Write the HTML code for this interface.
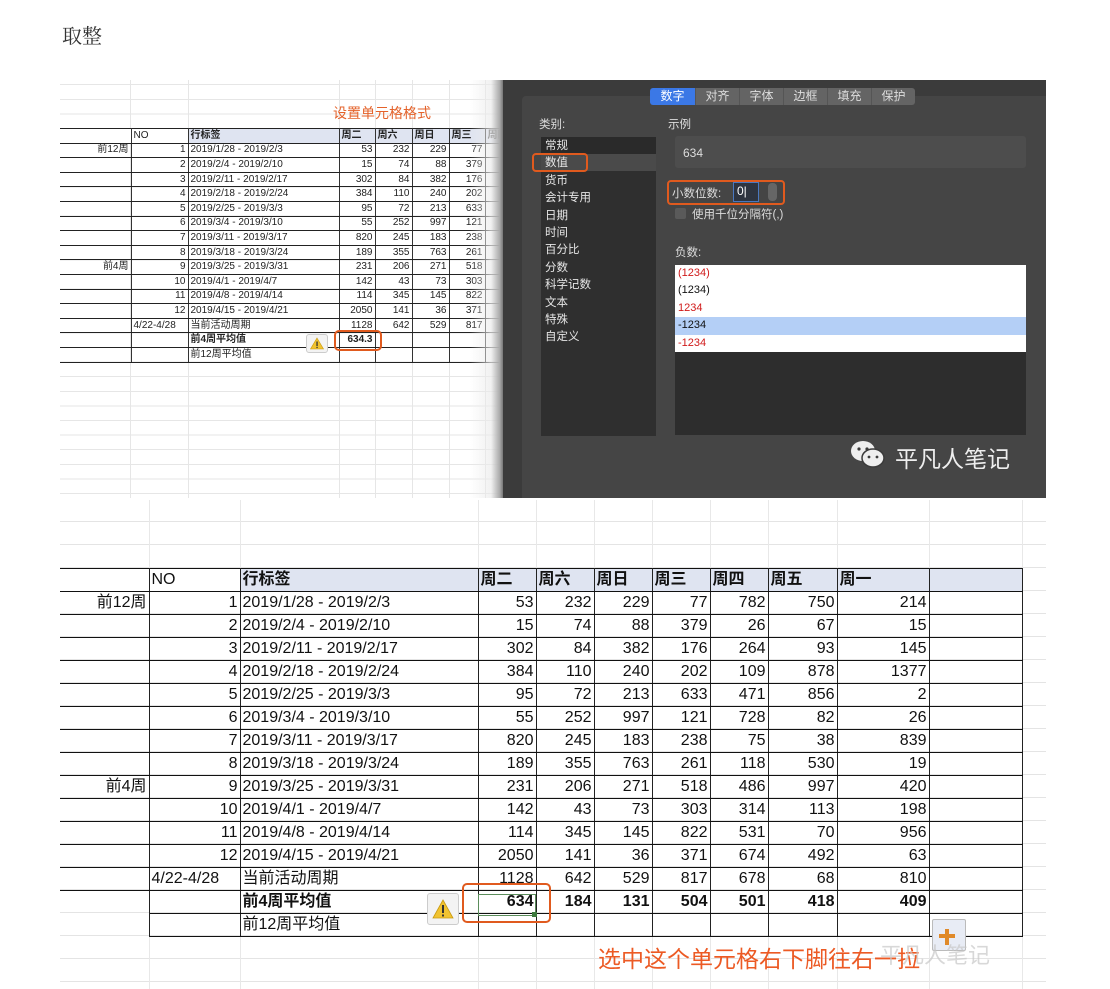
<!DOCTYPE html>
<html><head><meta charset="utf-8"><style>
body{margin:0;width:1110px;height:989px;background:#fff;position:relative;overflow:hidden;font-family:"Liberation Sans","Noto Sans CJK SC",sans-serif}
.abs{position:absolute}
table{border-collapse:collapse;table-layout:fixed;position:absolute}
td{padding:0 2px;white-space:nowrap;overflow:hidden;box-sizing:border-box}
.t td{height:14.6px;font-size:10px;line-height:12px;border-top:1.3px solid #222;border-bottom:1.3px solid #222;border-left:1px solid #333;border-right:1px solid #333;color:#222}
.b td{height:23px;font-size:16px;line-height:20px;border-top:1.6px solid #111;border-bottom:1.6px solid #111;border-left:1px solid #222;border-right:1px solid #222;color:#111}
td.f{border-left:none}
.r{text-align:right}
.h td{background:#dfe4f1}
.h td.f,.h td.n{background:#fff}
.bo td{font-weight:bold}
.nb{border-top:none!important;border-bottom:none!important}
.dlg{font-family:"Liberation Sans","Noto Sans CJK SC",sans-serif;color:#ddd;font-size:11.5px}
.warn{background:#f3f3f3;border:1px solid #ccc;border-radius:3px}
</style></head><body>
<div class="abs" style="left:62px;top:20px;font-size:20px;color:#333;font-family:'Liberation Serif','Noto Serif CJK SC',serif">取整</div>

<!-- top sheet -->
<div class="abs" style="left:60px;top:80px;width:445px;height:418px;background-color:#fff;
background-image:linear-gradient(90deg,transparent 70px,#e6e6e6 70px,#e6e6e6 71px,transparent 71px,transparent 128px,#e6e6e6 128px,#e6e6e6 129px,transparent 129px,transparent 279px,#e6e6e6 279px,#e6e6e6 280px,transparent 280px,transparent 315px,#e6e6e6 315px,#e6e6e6 316px,transparent 316px,transparent 352px,#e6e6e6 352px,#e6e6e6 353px,transparent 353px,transparent 389px,#e6e6e6 389px,#e6e6e6 390px,transparent 390px,transparent 425px,#e6e6e6 425px,#e6e6e6 426px,transparent 426px),repeating-linear-gradient(180deg,transparent 0,transparent 4.2px,#e6e6e6 4.2px,#e6e6e6 5.2px,transparent 5.2px,transparent 14.6px)"></div>
<div class="abs" style="left:333px;top:103px;font-size:14px;color:#e4622a">设置单元格格式</div>
<table class="t" style="left:60px;top:128px;width:445px">
<colgroup><col style="width:71px"><col style="width:57px"><col style="width:151px"><col style="width:36px"><col style="width:37px"><col style="width:37px"><col style="width:36px"><col style="width:20px"></colgroup>
<tr class="h"><td class="f"></td><td class="n">NO</td><td><b>行标签</b></td><td><b>周二</b></td><td><b>周六</b></td><td><b>周日</b></td><td><b>周三</b></td><td><b>周四</b></td></tr>
<tr><td class="f r">前12周</td><td class="r">1</td><td>2019/1/28 - 2019/2/3</td><td class="r">53</td><td class="r">232</td><td class="r">229</td><td class="r">77</td><td></td></tr>
<tr><td class="f"></td><td class="r">2</td><td>2019/2/4 - 2019/2/10</td><td class="r">15</td><td class="r">74</td><td class="r">88</td><td class="r">379</td><td></td></tr>
<tr><td class="f"></td><td class="r">3</td><td>2019/2/11 - 2019/2/17</td><td class="r">302</td><td class="r">84</td><td class="r">382</td><td class="r">176</td><td></td></tr>
<tr><td class="f"></td><td class="r">4</td><td>2019/2/18 - 2019/2/24</td><td class="r">384</td><td class="r">110</td><td class="r">240</td><td class="r">202</td><td></td></tr>
<tr><td class="f"></td><td class="r">5</td><td>2019/2/25 - 2019/3/3</td><td class="r">95</td><td class="r">72</td><td class="r">213</td><td class="r">633</td><td></td></tr>
<tr><td class="f"></td><td class="r">6</td><td>2019/3/4 - 2019/3/10</td><td class="r">55</td><td class="r">252</td><td class="r">997</td><td class="r">121</td><td></td></tr>
<tr><td class="f"></td><td class="r">7</td><td>2019/3/11 - 2019/3/17</td><td class="r">820</td><td class="r">245</td><td class="r">183</td><td class="r">238</td><td></td></tr>
<tr><td class="f"></td><td class="r">8</td><td>2019/3/18 - 2019/3/24</td><td class="r">189</td><td class="r">355</td><td class="r">763</td><td class="r">261</td><td></td></tr>
<tr><td class="f r">前4周</td><td class="r">9</td><td>2019/3/25 - 2019/3/31</td><td class="r">231</td><td class="r">206</td><td class="r">271</td><td class="r">518</td><td></td></tr>
<tr><td class="f"></td><td class="r">10</td><td>2019/4/1 - 2019/4/7</td><td class="r">142</td><td class="r">43</td><td class="r">73</td><td class="r">303</td><td></td></tr>
<tr><td class="f"></td><td class="r">11</td><td>2019/4/8 - 2019/4/14</td><td class="r">114</td><td class="r">345</td><td class="r">145</td><td class="r">822</td><td></td></tr>
<tr><td class="f"></td><td class="r">12</td><td>2019/4/15 - 2019/4/21</td><td class="r">2050</td><td class="r">141</td><td class="r">36</td><td class="r">371</td><td></td></tr>
<tr><td class="f"></td><td>4/22-4/28</td><td>当前活动周期</td><td class="r">1128</td><td class="r">642</td><td class="r">529</td><td class="r">817</td><td></td></tr>
<tr><td class="f"></td><td></td><td><b>前4周平均值</b></td><td class="r"><b>634.3</b></td><td></td><td></td><td></td><td></td></tr>
<tr><td class="f"></td><td></td><td>前12周平均值</td><td></td><td></td><td></td><td></td><td></td></tr>
</table>
<div class="abs" style="left:470px;top:80px;width:35px;height:418px;background:linear-gradient(90deg,rgba(255,255,255,0),rgba(235,235,235,.7) 60%,#aaa 85%,#555)"></div>
<div class="abs warn" style="left:306px;top:334px;width:20px;height:17px"><svg width="20" height="17"><path d="M10 3 L16.5 14 L3.5 14 Z" fill="#f1c330" stroke="#c99a10" stroke-width=".6"/><rect x="9.4" y="6.5" width="1.3" height="4.5" fill="#333"/><rect x="9.4" y="11.8" width="1.3" height="1.3" fill="#333"/></svg></div>
<div class="abs" style="left:334px;top:330px;width:44px;height:17px;border:2.5px solid #e05a1e;border-radius:5px"></div>

<!-- dialog -->
<div class="abs dlg" style="left:503px;top:80px;width:543px;height:418px;background:#3b3b3b">
 <div class="abs" style="left:19px;top:16px;width:524px;height:402px;background:#454545;border-radius:4px 0 0 0"></div>
 <div class="abs" style="left:147px;top:8px;height:17px;display:flex;font-size:12px;border-radius:3px;overflow:hidden">
  <div style="width:45px;background:#3b78e6;color:#fff;text-align:center;line-height:17px">数字</div>
  <div style="width:43px;background:#646464;text-align:center;line-height:17px;border-left:1px solid #555">对齐</div>
  <div style="width:43px;background:#646464;text-align:center;line-height:17px;border-left:1px solid #555">字体</div>
  <div style="width:43px;background:#646464;text-align:center;line-height:17px;border-left:1px solid #555">边框</div>
  <div style="width:43px;background:#646464;text-align:center;line-height:17px;border-left:1px solid #555">填充</div>
  <div style="width:43px;background:#646464;text-align:center;line-height:17px;border-left:1px solid #555">保护</div>
 </div>
 <div class="abs" style="left:36px;top:36px">类别:</div>
 <div class="abs" style="left:38px;top:57px;width:115px;height:299px;background:#2f2f2f"></div>
 <div class="abs" style="left:38px;top:57px;width:115px;height:17px;background:#2a2a2a"></div>
 <div class="abs" style="left:38px;top:74px;width:115px;height:17px;background:#4a4a4a"></div>
 <div class="abs" style="left:42px;top:58px;line-height:17.4px;color:#e6e6e6">常规<br>数值<br>货币<br>会计专用<br>日期<br>时间<br>百分比<br>分数<br>科学记数<br>文本<br>特殊<br>自定义</div>
 <div class="abs" style="left:29px;top:73px;width:52px;height:15px;border:2.5px solid #e05a1e;border-radius:4px"></div>
 <div class="abs" style="left:165px;top:36px">示例</div>
 <div class="abs" style="left:172px;top:56px;width:351px;height:32px;background:#4d4d4d;border-radius:3px"></div>
 <div class="abs" style="left:180px;top:66px;font-size:12px">634</div>
 <div class="abs" style="left:164px;top:100px;width:114px;height:21px;border:2.5px solid #e05a1e;border-radius:4px"></div>
 <div class="abs" style="left:169px;top:105px">小数位数:</div>
 <div class="abs" style="left:230px;top:102px;width:26px;height:20px;background:#2e3440;border:1.5px solid #4a78c0;box-sizing:border-box;color:#fff;font-size:12px;line-height:17px;padding-left:3px">0|</div>
 <div class="abs" style="left:265px;top:103px;width:9px;height:18px;background:#666;border-radius:4px"></div>
 <div class="abs" style="left:172px;top:128px;width:11px;height:11px;background:#5a5a5a;border-radius:2px"></div>
 <div class="abs" style="left:189px;top:126px">使用千位分隔符(,)</div>
 <div class="abs" style="left:172px;top:164px">负数:</div>
 <div class="abs" style="left:172px;top:185px;width:351px;height:87px;background:#fff;font-size:11px;line-height:17.4px">
  <div style="color:#d01a1a;padding-left:3px">(1234)</div>
  <div style="color:#111;padding-left:3px">(1234)</div>
  <div style="color:#d01a1a;padding-left:3px">1234</div>
  <div style="color:#111;padding-left:3px;background:#b4cff6">-1234</div>
  <div style="color:#d01a1a;padding-left:3px">-1234</div>
 </div>
 <div class="abs" style="left:172px;top:272px;width:351px;height:83px;background:#2d2d2d"></div>
 <svg class="abs" style="left:346px;top:358px" width="40" height="32"><ellipse cx="14" cy="13" rx="12" ry="10" fill="#eee"/><ellipse cx="24" cy="20" rx="11" ry="9" fill="#eee" stroke="#3b3b3b" stroke-width="1.5"/><circle cx="10" cy="11" r="1.6" fill="#3b3b3b"/><circle cx="18" cy="11" r="1.6" fill="#3b3b3b"/><circle cx="20" cy="19" r="1.4" fill="#3b3b3b"/><circle cx="28" cy="19" r="1.4" fill="#3b3b3b"/></svg>
 <div class="abs" style="left:392px;top:360px;font-size:23px;color:#eee">平凡人笔记</div>
</div>

<!-- bottom sheet -->
<div class="abs" style="left:60px;top:500px;width:986px;height:489px;
background-image:linear-gradient(90deg,transparent 89px,#e8e8e8 89px,#e8e8e8 90px,transparent 90px,transparent 180px,#e8e8e8 180px,#e8e8e8 181px,transparent 181px,transparent 418px,#e8e8e8 418px,#e8e8e8 419px,transparent 419px,transparent 476px,#e8e8e8 476px,#e8e8e8 477px,transparent 477px,transparent 534px,#e8e8e8 534px,#e8e8e8 535px,transparent 535px,transparent 592px,#e8e8e8 592px,#e8e8e8 593px,transparent 593px,transparent 650px,#e8e8e8 650px,#e8e8e8 651px,transparent 651px,transparent 708px,#e8e8e8 708px,#e8e8e8 709px,transparent 709px,transparent 777px,#e8e8e8 777px,#e8e8e8 778px,transparent 778px,transparent 869px,#e8e8e8 869px,#e8e8e8 870px,transparent 870px,transparent 962px,#e8e8e8 962px,#e8e8e8 963px,transparent 963px),repeating-linear-gradient(180deg,transparent 0,transparent 21px,#e4e4e4 21px,#e4e4e4 22px,transparent 22px,transparent 23px)"></div>
<table class="b" style="left:60px;top:568px;width:962px">
<colgroup><col style="width:89px"><col style="width:91px"><col style="width:238px"><col style="width:58px"><col style="width:58px"><col style="width:58px"><col style="width:58px"><col style="width:58px"><col style="width:69px"><col style="width:92px"><col style="width:93px"></colgroup>
<tr class="h"><td class="f"></td><td class="n">NO</td><td><b>行标签</b></td><td><b>周二</b></td><td><b>周六</b></td><td><b>周日</b></td><td><b>周三</b></td><td><b>周四</b></td><td><b>周五</b></td><td><b>周一</b></td><td></td></tr>
<tr><td class="f r">前12周</td><td class="r">1</td><td>2019/1/28 - 2019/2/3</td><td class="r">53</td><td class="r">232</td><td class="r">229</td><td class="r">77</td><td class="r">782</td><td class="r">750</td><td class="r">214</td><td></td></tr>
<tr><td class="f"></td><td class="r">2</td><td>2019/2/4 - 2019/2/10</td><td class="r">15</td><td class="r">74</td><td class="r">88</td><td class="r">379</td><td class="r">26</td><td class="r">67</td><td class="r">15</td><td></td></tr>
<tr><td class="f"></td><td class="r">3</td><td>2019/2/11 - 2019/2/17</td><td class="r">302</td><td class="r">84</td><td class="r">382</td><td class="r">176</td><td class="r">264</td><td class="r">93</td><td class="r">145</td><td></td></tr>
<tr><td class="f"></td><td class="r">4</td><td>2019/2/18 - 2019/2/24</td><td class="r">384</td><td class="r">110</td><td class="r">240</td><td class="r">202</td><td class="r">109</td><td class="r">878</td><td class="r">1377</td><td></td></tr>
<tr><td class="f"></td><td class="r">5</td><td>2019/2/25 - 2019/3/3</td><td class="r">95</td><td class="r">72</td><td class="r">213</td><td class="r">633</td><td class="r">471</td><td class="r">856</td><td class="r">2</td><td></td></tr>
<tr><td class="f"></td><td class="r">6</td><td>2019/3/4 - 2019/3/10</td><td class="r">55</td><td class="r">252</td><td class="r">997</td><td class="r">121</td><td class="r">728</td><td class="r">82</td><td class="r">26</td><td></td></tr>
<tr><td class="f"></td><td class="r">7</td><td>2019/3/11 - 2019/3/17</td><td class="r">820</td><td class="r">245</td><td class="r">183</td><td class="r">238</td><td class="r">75</td><td class="r">38</td><td class="r">839</td><td></td></tr>
<tr><td class="f"></td><td class="r">8</td><td>2019/3/18 - 2019/3/24</td><td class="r">189</td><td class="r">355</td><td class="r">763</td><td class="r">261</td><td class="r">118</td><td class="r">530</td><td class="r">19</td><td></td></tr>
<tr><td class="f r">前4周</td><td class="r">9</td><td>2019/3/25 - 2019/3/31</td><td class="r">231</td><td class="r">206</td><td class="r">271</td><td class="r">518</td><td class="r">486</td><td class="r">997</td><td class="r">420</td><td></td></tr>
<tr><td class="f"></td><td class="r">10</td><td>2019/4/1 - 2019/4/7</td><td class="r">142</td><td class="r">43</td><td class="r">73</td><td class="r">303</td><td class="r">314</td><td class="r">113</td><td class="r">198</td><td></td></tr>
<tr><td class="f"></td><td class="r">11</td><td>2019/4/8 - 2019/4/14</td><td class="r">114</td><td class="r">345</td><td class="r">145</td><td class="r">822</td><td class="r">531</td><td class="r">70</td><td class="r">956</td><td></td></tr>
<tr><td class="f"></td><td class="r">12</td><td>2019/4/15 - 2019/4/21</td><td class="r">2050</td><td class="r">141</td><td class="r">36</td><td class="r">371</td><td class="r">674</td><td class="r">492</td><td class="r">63</td><td></td></tr>
<tr><td class="f"></td><td>4/22-4/28</td><td>当前活动周期</td><td class="r">1128</td><td class="r">642</td><td class="r">529</td><td class="r">817</td><td class="r">678</td><td class="r">68</td><td class="r">810</td><td></td></tr>
<tr class="bo"><td class="f nb"></td><td></td><td>前4周平均值</td><td class="r">634</td><td class="r">184</td><td class="r">131</td><td class="r">504</td><td class="r">501</td><td class="r">418</td><td class="r">409</td><td></td></tr>
<tr><td class="f nb"></td><td></td><td>前12周平均值</td><td></td><td></td><td></td><td></td><td></td><td></td><td></td><td></td></tr>
</table>
<div class="abs warn" style="left:427px;top:893px;width:30px;height:30px"><svg width="30" height="30"><path d="M15 6 L25 24 L5 24 Z" fill="#f1c330" stroke="#c99a10" stroke-width=".8"/><rect x="14" y="11" width="2" height="8" fill="#333"/><rect x="14" y="20.5" width="2" height="2" fill="#333"/></svg></div>
<div class="abs" style="left:478px;top:894px;width:56px;height:20px;border:1.5px solid #5b8d5b"></div>
<div class="abs" style="left:532px;top:912px;width:5px;height:5px;background:#3d7a3d"></div>
<div class="abs" style="left:462px;top:883px;width:85px;height:36px;border:2.5px solid #e05a1e;border-radius:5px"></div>
<div class="abs" style="left:932px;top:919px;width:32px;height:30px;background:#e8ecf5;border:1px solid #bbb;border-radius:2px"><div style="position:absolute;left:12px;top:9px;width:4px;height:16px;background:#e08a2a"></div><div style="position:absolute;left:6px;top:14px;width:16px;height:4px;background:#e08a2a"></div></div>
<div class="abs" style="left:598px;top:940px;font-size:23px;color:#ec5a24">选中这个单元格右下脚往右一拉</div>
<div class="abs" style="left:880px;top:938px;font-size:22px;color:rgba(200,200,200,.7)">平凡人笔记</div>
</body></html>
